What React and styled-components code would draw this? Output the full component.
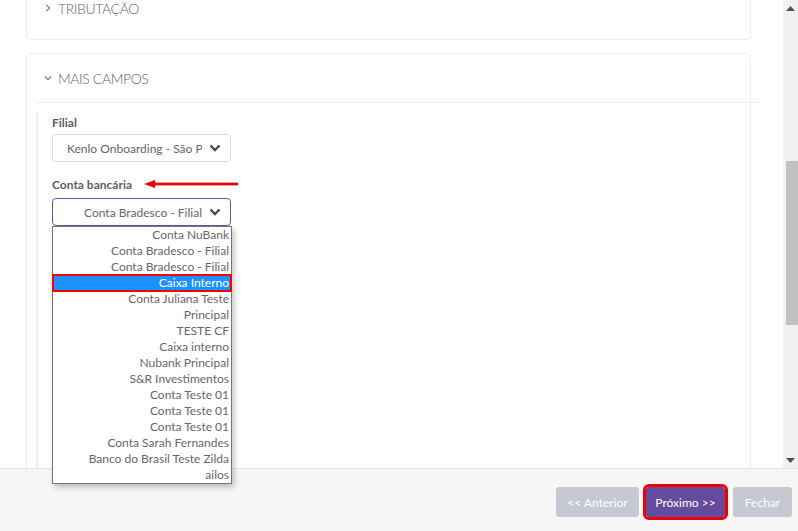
import React from 'react';
import styled, { createGlobalStyle } from 'styled-components';

const GlobalStyle = createGlobalStyle`
  html, body {
    margin: 0;
    padding: 0;
    background: #ffffff;
    font-family: Lato, "Open Sans", sans-serif;
    overflow: hidden;
  }
`;

const Page = styled.div`
  width: 798px;
  height: 531px;
  display: flex;
  flex-direction: column;
  overflow: hidden;
`;

const ScrollArea = styled.div`
  height: 468px;
  display: flex;
  flex-shrink: 0;
`;

const Content = styled.div`
  flex: 1;
  display: flex;
  flex-direction: column;
  padding: 0 32px 0 26px;
`;

const Card = styled.div`
  border: 1px solid #ececec;
  border-radius: 5px;
  background: #fff;
  display: flex;
  flex-direction: column;
  margin-top: ${p => p.$top}px;
  flex: ${p => (p.$grow ? 1 : 'none')};
  border-bottom: ${p => (p.$grow ? 'none' : '1px solid #ececec')};
  border-bottom-left-radius: ${p => (p.$grow ? 0 : 5)}px;
  border-bottom-right-radius: ${p => (p.$grow ? 0 : 5)}px;
`;

const CardHeader = styled.div`
  box-sizing: border-box;
  height: ${p => p.$h}px;
  display: flex;
  align-items: center;
  gap: 6px;
  color: #5f5f5f;
  font-size: 14px;
  font-weight: 300;
  letter-spacing: -0.4px;
  border-bottom: ${p => (p.$line ? '1px solid #ebebf0' : 'none')};
  margin: ${p => (p.$line ? '0 -10px 0 9px' : '0')};
  padding-left: ${p => (p.$line ? 8 : 17)}px;
`;

const CardBody = styled.div`
  flex: 1;
  display: flex;
  padding: 10px 0 0 9px;
`;

const Panel = styled.div`
  flex: 1;
  border-left: 2px solid #eeeeee;
  padding: 2px 0 0 14px;
  display: flex;
  flex-direction: column;
`;

const Label = styled.div`
  display: flex;
  align-items: center;
  gap: 12px;
  font-size: 12px;
  font-weight: 700;
  color: #5e5e5e;
  height: 14px;
  margin-top: ${p => p.$top}px;
`;

const SelectWrap = styled.div`
  position: relative;
  width: 179px;
  margin-top: ${p => p.$top}px;
`;

const SelectBox = styled.div`
  box-sizing: border-box;
  height: 28px;
  border: 1px solid ${p => (p.$active ? '#6b55a3' : '#dcdcdc')};
  border-radius: 4px;
  display: flex;
  align-items: center;
  padding: 0 9px 0 14px;
  font-size: 12px;
  color: #666;
  background: #fff;
`;

const SelectText = styled.span`
  flex: 1;
  overflow: hidden;
  white-space: nowrap;
  text-align: ${p => p.$align};
  margin-left: ${p => p.$pl}px;
  margin-right: ${p => p.$pr}px;
`;

const Dropdown = styled.div`
  position: absolute;
  z-index: 10;
  top: 28px;
  left: 0;
  width: 180px;
  box-sizing: border-box;
  border: 1px solid #767676;
  background: #fff;
  box-shadow: 2px 3px 6px rgba(0, 0, 0, 0.25);
  display: flex;
  flex-direction: column;
`;

const Option = styled.div`
  height: 16px;
  line-height: 16px;
  font-size: 12px;
  text-align: right;
  padding-right: 2px;
  color: ${p => (p.$selected ? '#fff' : '#666')};
  background: ${p => (p.$selected ? '#1e90ff' : 'transparent')};
  outline: ${p => (p.$selected ? '2px solid #f00' : 'none')};
  outline-offset: -1px;
  white-space: nowrap;
`;

const Scrollbar = styled.div`
  width: 15px;
  background: #f1f1f1;
  display: flex;
  flex-direction: column;
  align-items: center;
`;

const ScrollArrow = styled.div`
  height: 16px;
  width: 15px;
  display: flex;
  align-items: center;
  justify-content: center;
`;

const ScrollTrack = styled.div`
  flex: 1;
  width: 15px;
  display: flex;
  flex-direction: column;
  align-items: flex-end;
`;

const Thumb = styled.div`
  width: 12px;
  height: 164px;
  margin-top: 145px;
  background: #c1c1c1;
`;

const Footer = styled.div`
  height: 62px;
  border-top: 1px solid #e2e2e2;
  background: #f6f6f6;
  display: flex;
  justify-content: flex-end;
  align-items: flex-start;
  padding: 18px 6px 0 0;
  position: relative;
  z-index: 1;
`;

const Button = styled.div`
  width: ${p => p.$w}px;
  height: 30px;
  margin-left: ${p => p.$ml}px;
  border-radius: 3px;
  display: flex;
  align-items: center;
  justify-content: center;
  font-size: 12px;
  color: #fff;
  background: ${p => (p.$primary ? '#654a9d' : '#c6c9d3')};
  outline: ${p => (p.$primary ? '3px solid #ee0000' : 'none')};
`;

const Chevron = ({ down }) => (
  <svg width="8" height="8" viewBox="0 0 8 8">
    {down ? (
      <polyline points="1,2.5 4,5.5 7,2.5" fill="none" stroke="#777" strokeWidth="1.1" />
    ) : (
      <polyline points="2.5,1 5.5,4 2.5,7" fill="none" stroke="#777" strokeWidth="1.1" />
    )}
  </svg>
);

const SelectArrow = () => (
  <svg width="12" height="8" viewBox="0 0 12 8">
    <polyline points="1.5,1.5 6,6 10.5,1.5" fill="none" stroke="#4a4a4a" strokeWidth="2.4" />
  </svg>
);

const RedArrow = () => (
  <svg width="94" height="10" viewBox="0 0 94 10">
    <polygon points="0,5 11,1 11,9" fill="#ee0000" />
    <rect x="10" y="3.6" width="84" height="2.8" fill="#ee0000" />
  </svg>
);

const Tri = ({ up }) => (
  <svg width="9" height="5" viewBox="0 0 9 5">
    <polygon points={up ? '0,5 9,5 4.5,0' : '0,0 9,0 4.5,5'} fill="#505050" />
  </svg>
);

const contas = [
  'Conta NuBank',
  'Conta Bradesco - Filial',
  'Conta Bradesco - Filial',
  'Caixa Interno',
  'Conta Juliana Teste',
  'Principal',
  'TESTE CF',
  'Caixa interno',
  'Nubank Principal',
  'S&R Investimentos',
  'Conta Teste 01',
  'Conta Teste 01',
  'Conta Teste 01',
  'Conta Sarah Fernandes',
  'Banco do Brasil Teste Zilda',
  'ailos',
];

const App = () => {
  return (
    <Page>
      <GlobalStyle />
      <ScrollArea>
        <Content>
          <Card $top={-17}>
            <CardHeader $h={48}>
              <Chevron />
              TRIBUTAÇÃO
            </CardHeader>
            <div style={{ height: 7 }} />
          </Card>
          <Card $top={13} $grow>
            <CardHeader $h={49} $line>
              <Chevron down />
              MAIS CAMPOS
            </CardHeader>
            <CardBody>
              <Panel>
                <Label $top={0}>Filial</Label>
                <SelectWrap $top={5}>
                  <SelectBox>
                    <SelectText $align="left" $pl={0} $pr={7}>Kenlo Onboarding - São Paulo</SelectText>
                    <SelectArrow />
                  </SelectBox>
                </SelectWrap>
                <Label $top={15}>
                  Conta bancária
                  <RedArrow />
                </Label>
                <SelectWrap $top={7}>
                  <SelectBox $active>
                    <SelectText $align="center" $pl={10} $pr={0}>Conta Bradesco - Filial</SelectText>
                    <SelectArrow />
                  </SelectBox>
                  <Dropdown>
                    {contas.map((c, i) => (
                      <Option key={i} $selected={i === 3}>{c}</Option>
                    ))}
                  </Dropdown>
                </SelectWrap>
              </Panel>
            </CardBody>
          </Card>
        </Content>
        <Scrollbar>
          <ScrollArrow><Tri up /></ScrollArrow>
          <ScrollTrack><Thumb /></ScrollTrack>
          <ScrollArrow><Tri /></ScrollArrow>
        </Scrollbar>
      </ScrollArea>
      <Footer>
        <Button $w={83} $ml={0}>&lt;&lt; Anterior</Button>
        <Button $w={79} $ml={7} $primary>Próximo &gt;&gt;</Button>
        <Button $w={59} $ml={8}>Fechar</Button>
      </Footer>
    </Page>
  );
};

export default App;
